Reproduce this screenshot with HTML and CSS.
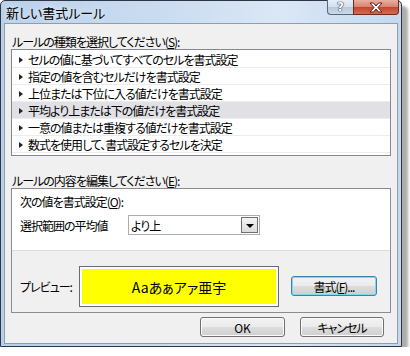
FILE: index.html
```html
<!DOCTYPE html>
<html lang="ja">

<head>
    <meta charset="UTF-8">
    <title>新しい書式ルール</title>
    <link rel="stylesheet" href="styles.css">
</head>

<body>
    <div class="window">
        <div class="titlebar">
            <span class="title">新しい書式ルール</span>
            <div class="caption">
                <span class="cap-btn help">?</span>
                <span class="cap-btn close">
                    <svg width="14" height="11" viewBox="0 0 14 11">
                        <path d="M1 1h3.5L7 4l2.5-3H13L9 5.5 13 10H9.5L7 7l-2.5 3H1l4-4.5z" fill="#fff" stroke="#5a2318" stroke-width="1" stroke-linejoin="round"/>
                    </svg>
                </span>
            </div>
        </div>

        <div class="client">
            <div class="label">ルールの種類を選択してください(<u>S</u>):</div>
            <ul class="rule-list">
                <li>セルの値に基づいてすべてのセルを書式設定</li>
                <li>指定の値を含むセルだけを書式設定</li>
                <li>上位または下位に入る値だけを書式設定</li>
                <li class="selected">平均より上または下の値だけを書式設定</li>
                <li>一意の値または重複する値だけを書式設定</li>
                <li>数式を使用して、書式設定するセルを決定</li>
            </ul>

            <div class="label label-edit">ルールの内容を編集してください(<u>E</u>):</div>
            <div class="panel">
                <div class="panel-top">
                    <div class="line">次の値を書式設定(<u>O</u>):</div>
                    <div class="row">
                        <span class="row-label">選択範囲の平均値</span>
                        <div class="combo">
                            <span>より上</span>
                            <span class="combo-btn"><i class="arrow-down"></i></span>
                        </div>
                    </div>
                </div>
                <div class="panel-bottom">
                    <span class="preview-label">プレビュー:</span>
                    <div class="preview">
                        <div class="preview-fill">Aaあぁアァ亜宇</div>
                    </div>
                    <button class="btn btn-default btn-format">書式(<u>F</u>)...</button>
                </div>
            </div>

            <div class="actions">
                <button class="btn btn-ok">OK</button>
                <button class="btn btn-cancel">キャンセル</button>
            </div>
        </div>
    </div>
</body>

</html>
```

FILE: styles.css
```css
* {
    box-sizing: border-box;
}

body {
    margin: 0;
    background: #fff;
    font-family: "Noto Sans CJK JP", sans-serif;
    font-size: 12px;
    color: #000;
    font-feature-settings: "palt";
    letter-spacing: -1px;
}

.window {
    position: relative;
    width: 402px;
    height: 347px;
    border: 1px solid #2f3642;
    border-radius: 5px 5px 0 0;
    background: linear-gradient(90deg, #b9d0eb 0%, #cadcf1 40%, #dae7f6 70%, #c4d8ee 100%);
    box-shadow: 6px 6px 3px rgba(0, 0, 0, 0.32);
    padding: 0 3px 2px;
    display: flex;
    flex-direction: column;
}

.titlebar {
    height: 22px;
    display: flex;
    align-items: center;
    padding-left: 2px;
}

.title {
    font-size: 13px;
    letter-spacing: 0;
    text-shadow: 0 0 6px #fff;
}

.caption {
    position: absolute;
    top: -1px;
    right: 2px;
    display: flex;
}

.cap-btn {
    height: 15px;
    display: flex;
    align-items: center;
    justify-content: center;
    border: 1px solid #5b6778;
    border-top: none;
}

.help {
    width: 26px;
    border-radius: 0 0 0 4px;
    border-right: none;
    background: linear-gradient(#e6eef8 0%, #d4e0ee 50%, #b9c9dc 51%, #c9d8ea 100%);
    color: #fff;
    font-family: "DejaVu Sans", sans-serif;
    font-weight: bold;
    font-size: 12px;
    letter-spacing: 0;
    text-shadow: 0 0 1px #2b3a4e, 0 0 1px #2b3a4e, 0 0 1px #2b3a4e;
}

.close {
    width: 46px;
    border-color: #6b2a1e;
    border-radius: 0 0 4px 0;
    background: linear-gradient(#eab0a2 0%, #d8826c 50%, #c4452c 51%, #d66a4f 100%);
}

.client {
    flex: 1;
    border: 1px solid #8d9db2;
    background: #f0f0f0;
    padding: 0 6px;
    display: flex;
    flex-direction: column;
}

.label {
    margin-top: 10px;
    line-height: 15px;
    padding-left: 1px;
}

.label-edit {
    margin-top: 17px;
}

.rule-list {
    list-style: none;
    margin: 0;
    padding: 1px 0 2px;
    height: 107px;
    border: 1px solid #828790;
    background: #fff;
}

.rule-list li {
    height: 17px;
    line-height: 17px;
    padding-left: 7px;
    padding-top: 1px;
    border-bottom: 1px solid #ececec;
    display: flex;
    align-items: center;
}

.rule-list li::before {
    content: "";
    border-left: 4px solid #222;
    border-top: 3px solid transparent;
    border-bottom: 3px solid transparent;
    margin-right: 5px;
}

.rule-list li.selected {
    background: #e0e0e5;
}

.panel {
    height: 125px;
    border: 1px solid #8c8c8c;
    display: flex;
    flex-direction: column;
}

.panel-top {
    height: 62px;
    background: #fff;
    border-bottom: 1px solid #dcdcdc;
    padding: 5px 8px 0;
}

.line {
    line-height: 15px;
}

.row {
    margin-top: 6px;
    height: 20px;
    display: flex;
    align-items: center;
}

.row-label {
    width: 108px;
}

.combo {
    width: 132px;
    height: 20px;
    border: 1px solid #abadb3;
    background: #fff;
    display: flex;
    align-items: center;
    justify-content: space-between;
    padding: 0 1px 0 2px;
}

.combo-btn {
    width: 17px;
    height: 16px;
    border: 1px solid #707070;
    background: linear-gradient(#f4f4f4, #dcdcdc);
    display: flex;
    align-items: center;
    justify-content: center;
}

.arrow-down {
    border-top: 4px solid #000;
    border-left: 4px solid transparent;
    border-right: 4px solid transparent;
    margin-top: 2px;
}

.panel-bottom {
    flex: 1;
    padding: 15px 0 0 8px;
    display: flex;
    align-items: flex-start;
}

.preview-label {
    width: 59px;
    line-height: 41px;
}

.preview {
    width: 200px;
    height: 41px;
    border: 1px solid #6b6b6b;
    padding: 2px;
    background: #fff;
}

.preview-fill {
    height: 100%;
    background: #ffff00;
    display: flex;
    align-items: center;
    justify-content: center;
    font-size: 14px;
    letter-spacing: 0;
}

.btn {
    height: 20px;
    border: 1px solid #707070;
    border-radius: 3px;
    background: linear-gradient(#f2f2f2 0%, #ebebeb 50%, #dddddd 51%, #cfcfcf 100%);
    box-shadow: inset 0 0 0 1px #fbfbfb;
    font-family: "Noto Sans CJK JP", sans-serif;
    font-size: 12px;
    font-feature-settings: "palt";
    letter-spacing: -1px;
    color: #000;
    padding: 0;
}

.btn-default {
    border-color: #3c7fb1;
    box-shadow: inset 0 0 0 1px #7fd6f6;
}

.btn-format {
    width: 86px;
    margin-left: 12px;
    margin-top: 10px;
}

.actions {
    margin-top: 4px;
    display: flex;
    justify-content: flex-end;
    gap: 15px;
    padding-right: 7px;
}

.btn-ok {
    width: 85px;
    letter-spacing: 0;
}

.btn-cancel {
    width: 84px;
}
```
